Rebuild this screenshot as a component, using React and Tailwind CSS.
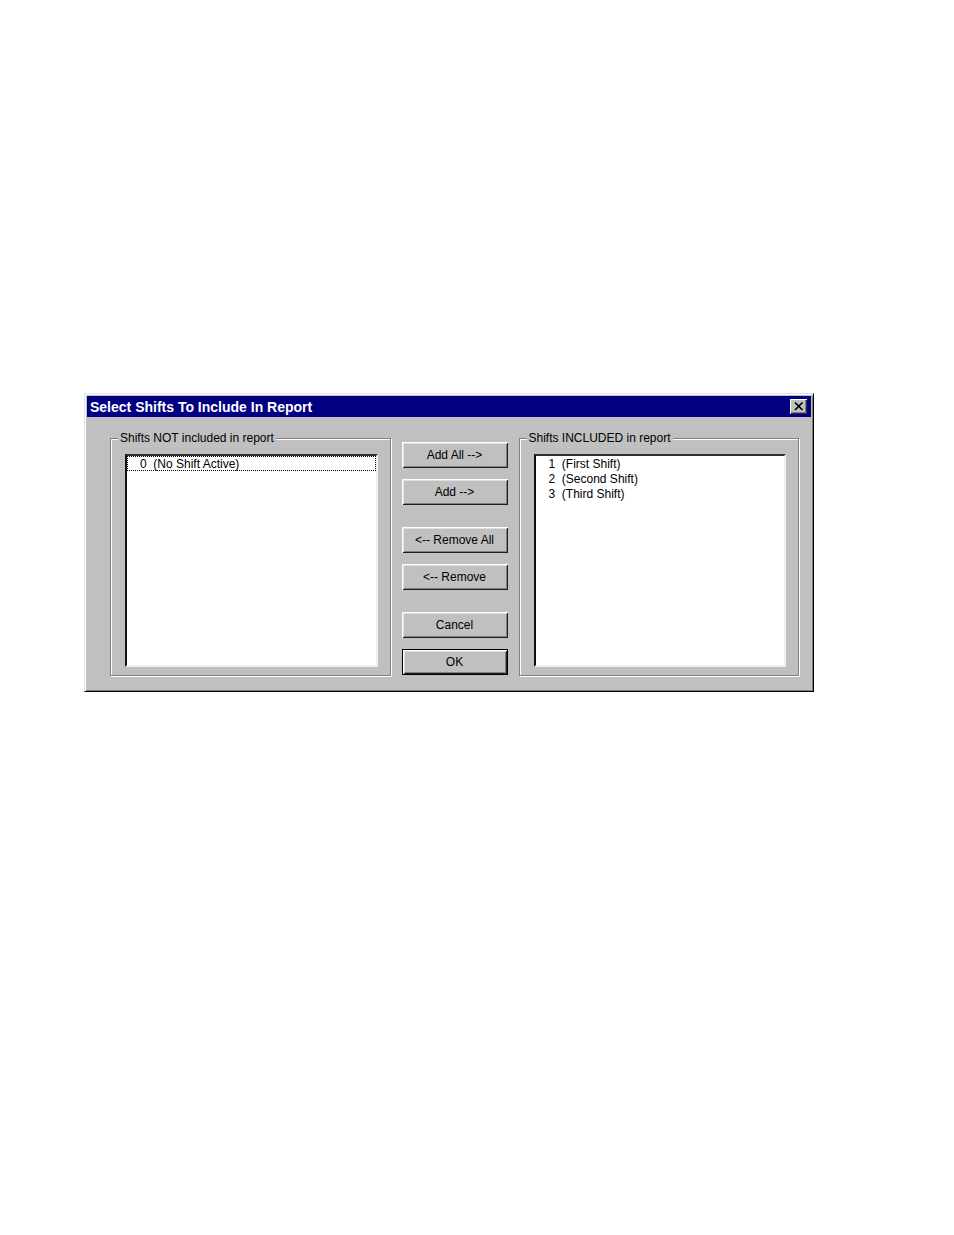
import React from 'react';

const excludedShifts = [{ id: 0, name: 'No Shift Active' }];

const includedShifts = [
  { id: 1, name: 'First Shift' },
  { id: 2, name: 'Second Shift' },
  { id: 3, name: 'Third Shift' },
];

const DialogButton = ({ children, isDefault }) => (
  <button
    type="button"
    className={`flex h-[26px] w-full items-center justify-center whitespace-nowrap text-xs ${
      isDefault
        ? 'border border-black shadow-[inset_1px_1px_#fff,inset_-1px_-1px_#202020,inset_2px_2px_#dfdfdf,inset_-2px_-2px_#808080]'
        : 'shadow-[inset_1px_1px_#fff,inset_-1px_-1px_#202020,inset_2px_2px_#dfdfdf,inset_-2px_-2px_#808080]'
    }`}
  >
    {children}
  </button>
);

const ShiftList = ({ id, title, shifts, focusedId }) => (
  <fieldset className="min-w-0 flex-1 border border-[#808080] pt-2 pr-3 pb-2 pl-[14px] shadow-[1px_1px_#fff,inset_1px_1px_#fff]">
    <legend className="-ml-[7px] bg-[#c0c0c0] px-[2px] text-xs">
      <label htmlFor={id}>{title}</label>
    </legend>
    <select
      id={id}
      size={14}
      multiple
      className="block h-[213px] w-full appearance-none overflow-hidden rounded-none border-2 border-t-[#303030] border-r-[#efefef] border-b-[#efefef] border-l-[#101010] bg-white p-0 text-xs text-black outline-none"
    >
      {shifts.map((shift) => (
        <option
          key={shift.id}
          value={shift.id}
          className={`h-[15px] min-h-0 border border-dotted py-0 pr-0 pl-[12px] leading-[13px] ${
            shift.id === focusedId ? 'border-black' : 'border-transparent'
          }`}
        >
          {`${shift.id}\u00a0\u00a0(${shift.name})`}
        </option>
      ))}
    </select>
  </fieldset>
);

const App = () => (
  <main className="min-h-screen bg-white pt-[393px] pr-[140px] pl-[84px] font-['Liberation_Sans',Arial,sans-serif] text-black">
    <section
      role="dialog"
      aria-labelledby="dialog-title"
      className="border border-t-[#dfdfdf] border-r-black border-b-black border-l-[#dfdfdf] bg-[#c0c0c0] p-[2px] shadow-[inset_1px_1px_#fff,inset_-1px_-1px_#808080]"
    >
      <header className="flex h-[21px] items-center justify-between bg-[#000080] pr-1 pl-[3px]">
        <h1 id="dialog-title" className="text-sm font-bold text-white">
          Select Shifts To Include In Report
        </h1>
        <button
          type="button"
          aria-label="Close"
          className="flex h-[15px] w-[17px] items-center justify-center bg-[#c0c0c0] shadow-[inset_1px_1px_#fff,inset_-1px_-1px_#303030,inset_-2px_-2px_#808080]"
        >
          <svg width="10" height="9" viewBox="0 0 10 9" stroke="#000" strokeWidth="1.7">
            <path d="M1 0.5 L8.5 8 M8.5 0.5 L1 8" />
          </svg>
        </button>
      </header>

      <div className="flex gap-[11px] pt-[13px] pr-3 pb-[13px] pl-[23px]">
        <ShiftList
          id="excluded-shifts"
          title="Shifts NOT included in report"
          shifts={excludedShifts}
          focusedId={0}
        />

        <div className="flex w-[106px] shrink-0 flex-col gap-[22px] pt-3">
          <div className="flex flex-col gap-[11px]">
            <DialogButton>Add All --&gt;</DialogButton>
            <DialogButton>Add --&gt;</DialogButton>
          </div>
          <div className="flex flex-col gap-[11px]">
            <DialogButton>&lt;-- Remove All</DialogButton>
            <DialogButton>&lt;-- Remove</DialogButton>
          </div>
          <div className="flex flex-col gap-[11px]">
            <DialogButton>Cancel</DialogButton>
            <DialogButton isDefault>OK</DialogButton>
          </div>
        </div>

        <ShiftList
          id="included-shifts"
          title="Shifts INCLUDED in report"
          shifts={includedShifts}
        />
      </div>
    </section>
  </main>
);

export default App;
